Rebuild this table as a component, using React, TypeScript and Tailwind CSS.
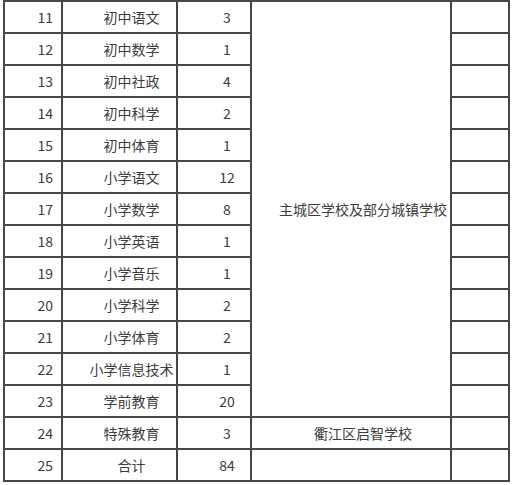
const rows: [number, string, number][] = [
  [11, "初中语文", 3],
  [12, "初中数学", 1],
  [13, "初中社政", 4],
  [14, "初中科学", 2],
  [15, "初中体育", 1],
  [16, "小学语文", 12],
  [17, "小学数学", 8],
  [18, "小学英语", 1],
  [19, "小学音乐", 1],
  [20, "小学科学", 2],
  [21, "小学体育", 2],
  [22, "小学信息技术", 1],
  [23, "学前教育", 20],
  [24, "特殊教育", 3],
  [25, "合计", 84],
];

const cell = "border-r-2 border-b-2 border-[#474747] p-0 align-middle whitespace-nowrap leading-none";

export default function App() {
  return (
    <div
      className="w-[513px] h-[485px] bg-white text-[#3c3c3c] text-[14px]"
      style={{ fontFamily: '"Noto Sans CJK SC", "Noto Sans", sans-serif' }}
    >
      <table className="ml-[3px] border-separate border-spacing-0 border-l-2 border-t-2 border-[#474747] table-fixed">
        <colgroup>
          <col className="w-[58px]" />
          <col className="w-[115px]" />
          <col className="w-[74px]" />
          <col className="w-[200px]" />
          <col className="w-[58px]" />
        </colgroup>
        <tbody>
          {rows.map(([n, name, count], i) => (
            <tr key={n} className="h-[32px]">
              <td className={cell + " text-right pr-[8px]"}>{n}</td>
              <td className={cell + " text-center pl-[24px]"}>{name}</td>
              <td className={cell + " text-center pl-[26px]"}>{count}</td>
              {i === 0 && (
                <td rowSpan={13} className={cell + " text-center pl-[24px]"}>
                  主城区学校及部分城镇学校
                </td>
              )}
              {i === 13 && (
                <td className={cell + " text-center pl-[24px]"}>衢江区启智学校</td>
              )}
              {i === 14 && <td className={cell}></td>}
              <td className={cell}></td>
            </tr>
          ))}
        </tbody>
      </table>
    </div>
  );
}
